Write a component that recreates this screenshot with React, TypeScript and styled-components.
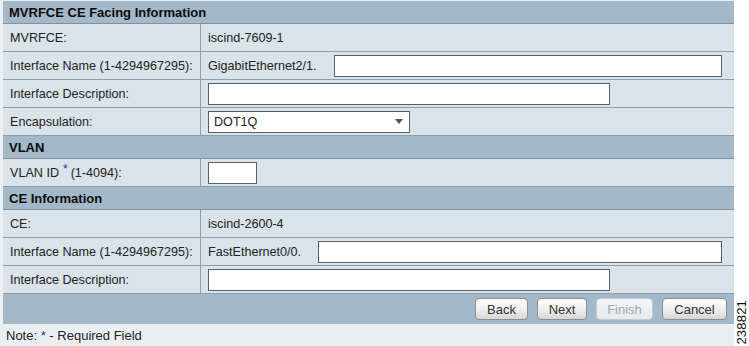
import React from "react";
import styled, { createGlobalStyle } from "styled-components";

const Global = createGlobalStyle`
  html, body { margin: 0; padding: 0; background: #ffffff; }
  body { font-family: "Liberation Sans", Arial, sans-serif; }
`;

const Page = styled.div`
  display: flex;
  width: 749px;
  height: 346px;
  background: #ffffff;
`;

const Panel = styled.div`
  width: 731px;
  padding: 1px 0 0 3px;
  background: #eceff2;
  display: flex;
  flex-direction: column;
`;

const Side = styled.div`
  flex: 1;
  display: flex;
  align-items: flex-end;
  justify-content: center;
  padding-bottom: 1px;
`;

const FigNum = styled.span`
  writing-mode: vertical-rl;
  transform: rotate(180deg);
  font-size: 13px;
  color: #111;
  letter-spacing: 0.2px;
  line-height: 1;
`;

const SectionHeader = styled.div`
  height: 22px;
  border-bottom: 1px solid #7e94a3;
  background: #a3b8c8;
  color: #0a0a0a;
  font-weight: bold;
  font-size: 13px;
  display: flex;
  align-items: center;
  padding-left: 6px;
`;

const Row = styled.div`
  height: 27px;
  border-bottom: 1px solid #8d9faa;
  background: #dae2ea;
  display: grid;
  grid-template-columns: 198px 1fr;
  font-size: 12.6px;
  color: #222;
`;

const Label = styled.div`
  border-right: 1px solid #8d9faa;
  display: flex;
  align-items: center;
  padding-left: 7px;
  white-space: nowrap;
`;

const Value = styled.div`
  display: flex;
  align-items: center;
  padding-left: 7px;
  padding-right: 12px;
  gap: 17px;
  white-space: nowrap;
`;

const Star = styled.span`
  color: #1b3d9c;
  font-size: 12px;
  position: relative;
  top: -4px;
  margin: 0 3px 0 4px;
`;

const NoteStar = styled.span`
  color: #1b3d9c;
`;

const TextInput = styled.div<{ $w?: number; $grow?: boolean }>`
  box-sizing: border-box;
  height: 22px;
  background: #ffffff;
  border: 1px solid #56616b;
  ${(p) => (p.$grow ? "flex: 1;" : `width: ${p.$w}px; flex: none;`)}
`;

const Select = styled.div`
  box-sizing: border-box;
  width: 202px;
  height: 22px;
  background: #ffffff;
  border: 1px solid #56616b;
  display: flex;
  align-items: center;
  justify-content: space-between;
  padding: 0 5px 0 5px;
  font-size: 12.6px;
  color: #222;
`;

const Arrow = styled.span`
  width: 0;
  height: 0;
  border-left: 4px solid transparent;
  border-right: 4px solid transparent;
  border-top: 5px solid #555;
  margin-right: 1px;
`;

const ButtonBar = styled.div`
  height: 30px;
  background: #a3b8c8;
  display: flex;
  align-items: center;
  justify-content: flex-end;
  gap: 9px;
  padding-right: 7px;
`;

const Button = styled.div<{ $w: number; $disabled?: boolean }>`
  box-sizing: border-box;
  width: ${(p) => p.$w}px;
  height: 22px;
  border-radius: 4px;
  border: 1px solid ${(p) => (p.$disabled ? "#c2cad1" : "#8a8f94")};
  background: ${(p) =>
    p.$disabled
      ? "linear-gradient(#f3f5f7, #e6eaee)"
      : "linear-gradient(#ffffff 0%, #f0f0f0 50%, #d6d6d6 100%)"};
  color: ${(p) => (p.$disabled ? "#a3a8ad" : "#333")};
  font-size: 13px;
  display: flex;
  align-items: center;
  justify-content: center;
`;

const Note = styled.div`
  flex: 1;
  display: flex;
  align-items: center;
  font-size: 13px;
  color: #222;
  padding-left: 3px;
`;

export default function App() {
  return (
    <>
      <Global />
      <Page>
        <Panel>
          <SectionHeader>MVRFCE CE Facing Information</SectionHeader>
          <Row>
            <Label>MVRFCE:</Label>
            <Value>iscind-7609-1</Value>
          </Row>
          <Row>
            <Label>Interface Name (1-4294967295):</Label>
            <Value>
              <span>GigabitEthernet2/1.</span>
              <TextInput $grow />
            </Value>
          </Row>
          <Row>
            <Label>Interface Description:</Label>
            <Value>
              <TextInput $w={402} />
            </Value>
          </Row>
          <Row>
            <Label>Encapsulation:</Label>
            <Value>
              <Select>
                <span>DOT1Q</span>
                <Arrow />
              </Select>
            </Value>
          </Row>
          <SectionHeader>VLAN</SectionHeader>
          <Row>
            <Label>
              VLAN ID<Star>*</Star>(1-4094):
            </Label>
            <Value>
              <TextInput $w={49} />
            </Value>
          </Row>
          <SectionHeader>CE Information</SectionHeader>
          <Row>
            <Label>CE:</Label>
            <Value>iscind-2600-4</Value>
          </Row>
          <Row>
            <Label>Interface Name (1-4294967295):</Label>
            <Value>
              <span>FastEthernet0/0.</span>
              <TextInput $grow />
            </Value>
          </Row>
          <Row>
            <Label>Interface Description:</Label>
            <Value>
              <TextInput $w={402} />
            </Value>
          </Row>
          <ButtonBar>
            <Button $w={53}>Back</Button>
            <Button $w={50}>Next</Button>
            <Button $w={57} $disabled>
              Finish
            </Button>
            <Button $w={65}>Cancel</Button>
          </ButtonBar>
          <Note>
            Note:&nbsp;<NoteStar>*</NoteStar>&nbsp;- Required Field
          </Note>
        </Panel>
        <Side>
          <FigNum>238821</FigNum>
        </Side>
      </Page>
    </>
  );
}
